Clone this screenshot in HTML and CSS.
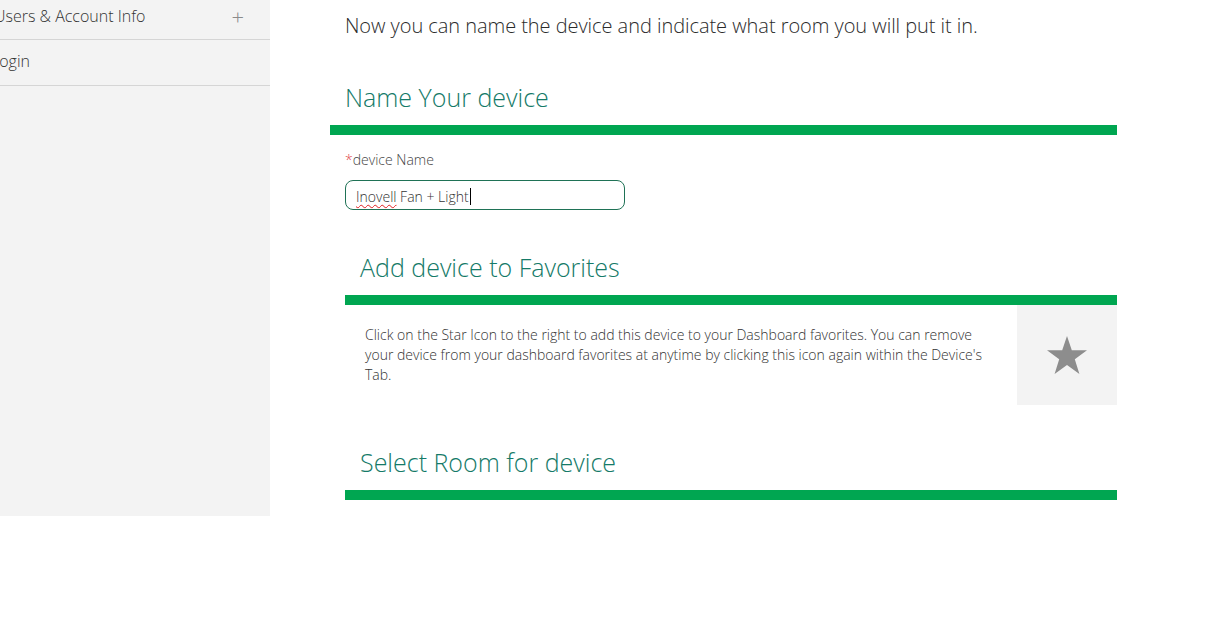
FILE: index.html
```html
<!DOCTYPE html>
<html lang="en">
<head>
<meta charset="utf-8">
<link rel="stylesheet" href="styles.css">
</head>
<body>
<div class="page">
  <aside class="sidebar">
    <div class="nav-item first"><span class="nav-label">Users &amp; Account Info</span><span class="nav-plus">+</span></div>
    <div class="nav-item"><span class="nav-label">Login</span></div>
  </aside>
  <main class="main">
    <p class="intro">Now you can name the device and indicate what room you will put it in.</p>
    <h2 class="heading">Name Your device</h2>
    <div class="bar"></div>
    <div class="field">
      <label class="field-label"><span class="req">*</span>device Name</label>
      <div class="input"><span class="typo">Inovell</span> Fan + Light<span class="caret"></span></div>
    </div>
    <section class="section">
      <h2 class="heading sub">Add device to Favorites</h2>
      <div class="bar"></div>
      <div class="fav-row">
        <p class="fav-text">Click on the Star Icon to the right to add this device to your Dashboard favorites. You can remove your device from your dashboard favorites at anytime by clicking this icon again within the Device's Tab.</p>
        <div class="star-box">
          <svg width="42" height="40" viewBox="0 0 42 40"><polygon points="21,1 25.8,15.2 41,15.2 28.8,24.2 33.4,39 21,30 8.6,39 13.2,24.2 1,15.2 16.2,15.2" fill="#8d8d8d"/></svg>
        </div>
      </div>
    </section>
    <section class="section">
      <h2 class="heading sub">Select Room for device</h2>
      <div class="bar"></div>
    </section>
  </main>
</div>
</body>
</html>
```

FILE: styles.css
```css
* { box-sizing: border-box; }
html, body { margin: 0; padding: 0; background: #fff; }
body {
  font-family: "Open Sans", "Liberation Sans", sans-serif;
  font-weight: 300;
  color: #333;
  width: 1228px;
  height: 630px;
  overflow: hidden;
}
.page { display: flex; align-items: flex-start; }
.sidebar {
  width: 270px;
  height: 516px;
  background: #f3f3f3;
  flex: none;
}
.nav-item {
  height: 46px;
  border-bottom: 1px solid #d5d5d5;
  display: flex;
  align-items: center;
  justify-content: space-between;
  font-size: 16px;
  color: #333;
  padding-right: 26px;
  overflow: hidden;
}
.nav-item.first { height: 40px; padding-bottom: 8px; }
.nav-item .nav-label { margin-left: -6px; white-space: nowrap; }
.nav-item:not(.first) .nav-label { margin-left: -9px; padding-bottom: 3px; }
.nav-plus { font-size: 22px; color: #8a8a8a; font-weight: 300; line-height: 1; }
.main {
  margin-left: 60px;
  width: 787px;
}
.intro {
  margin: 12px 0 0 15px;
  font-size: 20px;
  line-height: 28px;
  color: #2b2b2b;
  letter-spacing: -0.05px;
}
.heading {
  margin: 39px 0 10px 15px;
  font-size: 25px;
  line-height: 36px;
  font-weight: 300;
  color: #157a68;
}
.bar { height: 10px; background: #00a651; }
.field { padding-left: 15px; }
.field-label {
  display: block;
  margin-top: 15px;
  font-size: 14px;
  line-height: 20px;
  color: #444;
}
.req { color: #e0474c; }
.input {
  margin-top: 10px;
  width: 280px;
  height: 30px;
  border: 1px solid #1f7256;
  border-radius: 8px;
  padding: 3px 0 0 10px;
  font-size: 14px;
  line-height: 24px;
  color: #333;
  display: flex;
  align-items: center;
  white-space: pre;
}
.typo { text-decoration: underline wavy #e02020; text-decoration-thickness: 1px; text-underline-offset: 2px; }
.caret { display: inline-block; width: 1px; height: 17px; background: #000; margin-left: 1px; }
.section { margin-left: 15px; }
.heading.sub { margin-left: 15px; }
.fav-row { display: flex; height: 100px; }
.fav-text {
  flex: 1;
  margin: 0;
  padding: 20px 30px 0 20px;
  font-size: 14px;
  line-height: 20px;
  color: #333;
}
.star-box {
  width: 100px;
  height: 100px;
  background: #f3f3f3;
  display: flex;
  align-items: center;
  justify-content: center;
  flex: none;
}
```
